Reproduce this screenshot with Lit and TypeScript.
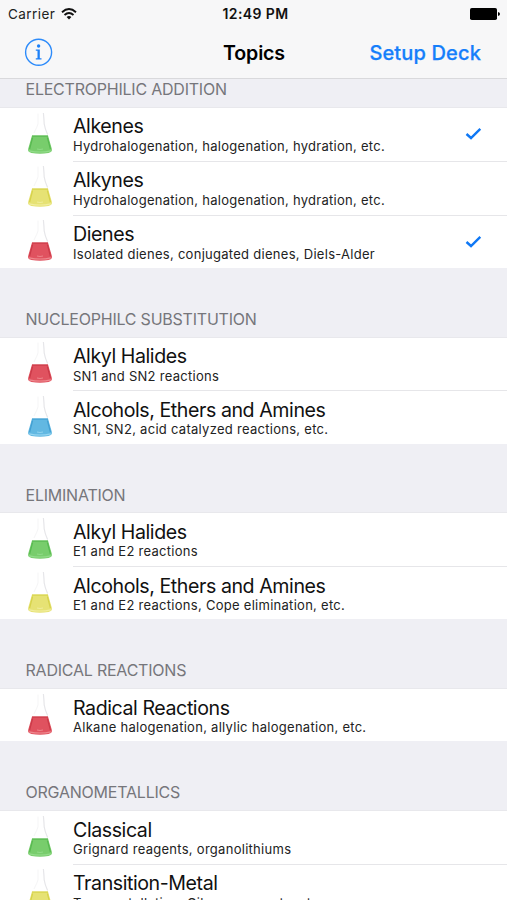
import { LitElement, html, css, svg, nothing } from "lit";
import { customElement, property } from "lit/decorators.js";

interface Topic { title: string; detail: string; color: string; checked?: boolean }
interface Section { name: string; topics: Topic[] }

const SECTIONS: Section[] = [
  { name: "ELECTROPHILIC ADDITION", topics: [
    { title: "Alkenes", detail: "Hydrohalogenation, halogenation, hydration, etc.", color: "green", checked: true },
    { title: "Alkynes", detail: "Hydrohalogenation, halogenation, hydration, etc.", color: "yellow" },
    { title: "Dienes", detail: "Isolated dienes, conjugated dienes, Diels-Alder", color: "red", checked: true },
  ] },
  { name: "NUCLEOPHILC SUBSTITUTION", topics: [
    { title: "Alkyl Halides", detail: "SN1 and SN2 reactions", color: "red" },
    { title: "Alcohols, Ethers and Amines", detail: "SN1, SN2, acid catalyzed reactions, etc.", color: "blue" },
  ] },
  { name: "ELIMINATION", topics: [
    { title: "Alkyl Halides", detail: "E1 and E2 reactions", color: "green" },
    { title: "Alcohols, Ethers and Amines", detail: "E1 and E2 reactions, Cope elimination, etc.", color: "yellow" },
  ] },
  { name: "RADICAL REACTIONS", topics: [
    { title: "Radical Reactions", detail: "Alkane halogenation, allylic halogenation, etc.", color: "red" },
  ] },
  { name: "ORGANOMETALLICS", topics: [
    { title: "Classical", detail: "Grignard reagents, organolithiums", color: "green" },
    { title: "Transition-Metal", detail: "Transmetallation, Gilman reagents, etc.", color: "yellow" },
  ] },
];

const LIQUIDS: Record<string, [string, string, string]> = {
  green: ["#78cd6c", "#57b950", "#93dc8b"],
  yellow: ["#e6e274", "#d6d24a", "#f1eea0"],
  red: ["#e0525f", "#cb3a48", "#ee8a90"],
  blue: ["#62b8e2", "#429fd2", "#97d6f2"],
};

@customElement("topic-flask")
class TopicFlask extends LitElement {
  @property() color = "green";
  static styles = css`:host { display: block; } svg { display: block; }`;
  render() {
    const [main, edge, light] = LIQUIDS[this.color];
    return html`<svg width="28" height="44" viewBox="0 0 28 44">
      <path d="M12 1.5V12Q11 15 8 21" fill="none" stroke="#f5f5f6" stroke-width="1"/>
      <path d="M17.4 1Q18 7 18.2 12Q19 17 21.6 22.5" fill="none" stroke="#e6e6e9" stroke-width="1.2"/>
      ${svg`<path d="M6 23.6H22L25.8 36.8Q26.7 40.2 22.5 40.9Q14 42.4 5.5 40.9Q1.3 40.2 2.2 36.8Z" fill=${main}/>
      <path d="M6 24.1H22" stroke=${edge} stroke-width="1.1"/>
      <path d="M6.6 25.5L3.6 37M21.4 25.5L24.4 37" stroke=${edge} stroke-width="1.2" fill="none"/>
      <path d="M3.2 38.8Q14 41.2 24.8 38.8" stroke=${light} stroke-width="1.2" fill="none"/>
      <path d="M11 37Q14 38 17 37" stroke=${light} stroke-width="0.9" fill="none"/>`}
    </svg>`;
  }
}

@customElement("topic-row")
class TopicRow extends LitElement {
  @property({ attribute: false }) topic!: Topic;
  static styles = css`
    :host { display: flex; height: 53.8px; padding-left: 26px; background: #fff; box-sizing: border-box; }
    topic-flask { margin-top: 3.5px; width: 28px; flex: none; }
    .body { flex: 1; margin-left: 19px; display: flex; justify-content: space-between; align-items: flex-start; border-bottom: 1px solid #e6e6e9; box-sizing: border-box; padding: 7.4px 25px 0 0; }
    :host([last]) { height: 52.2px; }
    :host([last]) .body { border-bottom: none; }
    .title { font-size: 19.6px; line-height: 22px; letter-spacing: -0.43px; color: #111; white-space: nowrap; }
    .detail { margin-top: 0.7px; font-size: 13px; line-height: 17px; letter-spacing: 0.28px; color: #222; white-space: nowrap; }
    .check { display: block; margin-top: 11.6px; }
  `;
  render() {
    const t = this.topic;
    return html`<topic-flask .color=${t.color}></topic-flask>
      <div class="body">
        <div><div class="title">${t.title}</div><div class="detail">${t.detail}</div></div>
        ${t.checked ? html`<svg class="check" width="17" height="14" viewBox="0 0 17 14"><path d="M1.5 7L6 11L15.3 1.8" fill="none" stroke="#0f78f5" stroke-width="2.4"/></svg>` : nothing}
      </div>`;
  }
}

@customElement("app-root")
class AppRoot extends LitElement {
  static styles = css`
    :host { display: flex; flex-direction: column; width: 507px; height: 900px; overflow: hidden; background: #efeff4; font-family: Inter, "Liberation Sans", sans-serif; }
    .top { flex: none; height: 79px; box-sizing: border-box; background: #f7f7f8; border-bottom: 1px solid #d9d9dc; }
    .status, .nav { display: grid; grid-template-columns: 1fr auto 1fr; align-items: center; }
    .status { height: 27px; padding: 0 7px 0 8px; font-size: 13.5px; color: #222; }
    .carrier { display: flex; align-items: center; gap: 6px; letter-spacing: 0.45px; }
    .time { font-size: 14px; font-weight: 600; letter-spacing: 0.4px; padding-left: 3px; color: #111; }
    .battery { justify-self: end; }
    .nav { height: 51px; padding: 0 26px 0 24px; }
    .nav svg, .status svg { display: block; }
    .heading { font-size: 19.6px; font-weight: 600; letter-spacing: -0.15px; padding-left: 3px; color: #000; }
    .setup { justify-self: end; font-size: 20px; font-weight: 500; letter-spacing: 0.15px; color: #157efb; -webkit-text-stroke: 0.25px #157efb; }
    .list { flex: 1; overflow: hidden; }
    .name { height: 69.8px; box-sizing: border-box; padding: 0 0 7.8px 25.5px; display: flex; align-items: flex-end; font-size: 16px; line-height: 20px; letter-spacing: -0.22px; color: #76767b; border-bottom: 1px solid #e8e8ec; }
    .name.first { height: 29px; padding-bottom: 8px; }
  `;
  render() {
    return html`
      <header class="top">
        <div class="status">
          <div class="carrier"><span>Carrier</span>
            <svg width="16" height="12" viewBox="0 0 16 12"><g fill="none" stroke="#111" stroke-width="1.9"><path d="M1 4.2Q8 -2 15 4.2"/><path d="M3.5 7Q8 3 12.5 7"/></g><path d="M5.6 8.9Q8 7 10.4 8.9L8 11.5Z" fill="#111"/></svg>
          </div>
          <span class="time">12:49 PM</span>
          <svg class="battery" width="30" height="12" viewBox="0 0 30 12"><rect width="27" height="12" rx="1.8" fill="#000"/><path d="M28 4Q30 4.5 30 6T28 8Z" fill="#000"/></svg>
        </div>
        <div class="nav">
          <svg width="29" height="29" viewBox="0 0 29 29"><circle cx="14.6" cy="14.2" r="13" fill="none" stroke="#2d8bfa" stroke-width="1.4"/><circle cx="14.6" cy="8" r="1.7" fill="#1c80f8"/><path d="M11.8 11.5H15.8V20.3H17.5V21.5H11.8V20.3H13.5V12.7H11.8Z" fill="#1c80f8"/></svg>
          <span class="heading">Topics</span>
          <span class="setup">Setup Deck</span>
        </div>
      </header>
      <main class="list">
        ${SECTIONS.map((s, i) => html`<section>
          <div class="name ${i === 0 ? "first" : ""}">${s.name}</div>
          ${s.topics.map((t, j) => html`<topic-row .topic=${t} ?last=${j === s.topics.length - 1 && i < SECTIONS.length - 1}></topic-row>`)}
        </section>`)}
      </main>`;
  }
}
